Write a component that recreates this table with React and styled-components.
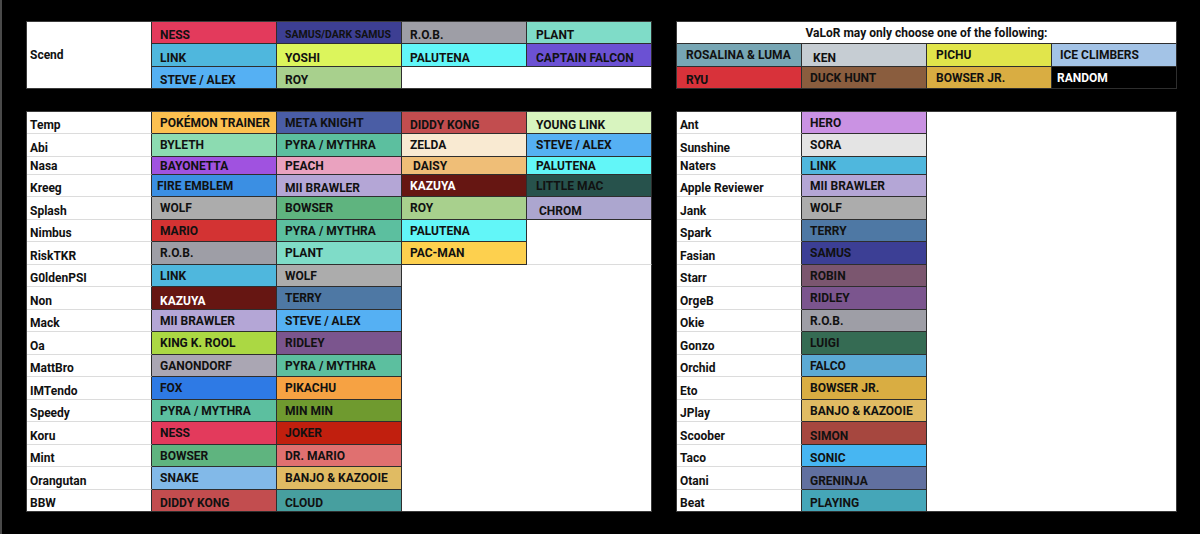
import React from 'react'
import styled, { createGlobalStyle } from 'styled-components'

const Global = createGlobalStyle`
  html, body {
    margin: 0;
    padding: 0;
    background: #000;
  }
`

const Page = styled.div`
  width: 1200px;
  height: 534px;
  box-sizing: border-box;
  background: #000;
  border-left: 2px solid #4a4a4a;
  padding: 21px 0 0 24px;
  display: flex;
  flex-direction: column;
  gap: 22px;
  overflow: hidden;
  font-family: Roboto, "Liberation Sans", Arial, sans-serif;
  font-weight: 700;
  font-size: 12px;
  line-height: 14px;
`

const Section = styled.div`
  display: flex;
  align-items: flex-start;
  gap: 24px;
`

const Sheet = styled.div`
  display: grid;
  grid-template-columns: repeat(${p => p.$cols}, 125px);
  grid-template-rows: ${p => p.$rows};
  background: #fff;
  border-top: 1px solid #3a3a3a;
  border-left: 1px solid #3a3a3a;
`

const NameCell = styled.div`
  display: flex;
  align-items: ${p => (p.$center ? 'center' : 'flex-end')};
  padding: 0 0 1px 3px;
  background: #fff;
  color: #111;
  white-space: nowrap;
  border-right: 1px solid #2e2e2e;
  border-bottom: 1px solid ${p => (p.$last ? '#3a3a3a' : '#dcdcdc')};
  grid-row: ${p => (p.$span ? `span ${p.$span}` : 'auto')};
`

const Pick = styled.div`
  display: flex;
  align-items: ${p => (p.$low ? 'flex-end' : 'center')};
  padding: 0 2px ${p => (p.$low ? '1px' : '0')} ${p => p.$indent}px;
  background: ${p => p.$bg};
  color: ${p => (p.$light ? '#fff' : '#111')};
  font-size: ${p => (p.$small ? '10.5px' : '12px')};
  white-space: nowrap;
  overflow: hidden;
  border-right: 1px solid #2e2e2e;
  border-bottom: 1px solid #2e2e2e;
`

const Header = styled.div`
  grid-column: 1 / span 4;
  display: flex;
  align-items: center;
  justify-content: center;
  background: #fff;
  color: #111;
  border-right: 1px solid #3a3a3a;
  border-bottom: 1px solid #2e2e2e;
`

const Blank = styled.div`
  grid-column: ${p => p.$col} / span ${p => p.$w};
  grid-row: ${p => p.$row} / span ${p => p.$h};
  background: #fff;
  border-right: 1px solid #3a3a3a;
  border-bottom: 1px solid ${p => p.$line || '#3a3a3a'};
`

const MAIN_ROWS = '22px 23px 18px 22px 23px 22px 23px 22px 23px 22px 23px 22px 23px 22px 23px 22px 23px 22px'

// [text, colour, options]
const scendPicks = [
  ['NESS', '#e33a5c'], ['SAMUS/DARK SAMUS', '#3d3f93', { small: true }], ['R.O.B.', '#9e9ea6'], ['PLANT', '#7fdcc8', { indent: 9 }],
  ['LINK', '#4fb7dd'], ['YOSHI', '#dcf55c'], ['PALUTENA', '#62f6f8'], ['CAPTAIN FALCON', '#6b51d3', { indent: 9 }],
  ['STEVE / ALEX', '#55b0f3'], ['ROY', '#a8d08d'],
]

const valorPicks = [
  ['ROSALINA & LUMA', '#77a6b4', { indent: 9 }], ['KEN', '#c6cdd3', { low: true, indent: 11 }], ['PICHU', '#e1e54b', { indent: 9 }], ['ICE CLIMBERS', '#a3c3e6'],
  ['RYU', '#d8323a', { low: true, indent: 9 }], ['DUCK HUNT', '#8a5d3e'], ['BOWSER JR.', '#d9ad42', { indent: 9 }], ['RANDOM', '#000', { light: true, indent: 5 }],
]

const leftRows = [
  ['Temp', [['POKÉMON TRAINER', '#fcc050'], ['META KNIGHT', '#4a5da5'], ['DIDDY KONG', '#c24d4f', { low: true }], ['YOUNG LINK', '#d8f4bf', { low: true, indent: 9 }]]],
  ['Abi', [['BYLETH', '#8cdbb1'], ['PYRA / MYTHRA', '#5cbf9f'], ['ZELDA', '#f9ead2'], ['STEVE / ALEX', '#55b0f3', { indent: 9 }]]],
  ['Nasa', [['BAYONETTA', '#a052e0'], ['PEACH', '#eaa2bf'], ['DAISY', '#efbe77', { indent: 11 }], ['PALUTENA', '#62f6f8', { indent: 9 }]]],
  ['Kreeg', [['FIRE EMBLEM', '#3b8fe3', { indent: 5 }], ['MII BRAWLER', '#b4a6d6', { low: true }], ['KAZUYA', '#661612', { light: true }], ['LITTLE MAC', '#27524c', { indent: 9 }]]],
  ['Splash', [['WOLF', '#acacac'], ['BOWSER', '#5fb47f'], ['ROY', '#a8d08d'], ['CHROM', '#aca6cf', { low: true, indent: 12 }]]],
  ['Nimbus', [['MARIO', '#d33333'], ['PYRA / MYTHRA', '#5cbf9f'], ['PALUTENA', '#62f6f8']]],
  ['RiskTKR', [['R.O.B.', '#9e9ea6'], ['PLANT', '#7fdcc8'], ['PAC-MAN', '#fdd04e']]],
  ['G0ldenPSI', [['LINK', '#4fb7dd'], ['WOLF', '#acacac']]],
  ['Non', [['KAZUYA', '#661612', { light: true, low: true }], ['TERRY', '#4e78a4']]],
  ['Mack', [['MII BRAWLER', '#b4a6d6'], ['STEVE / ALEX', '#55b0f3']]],
  ['Oa', [['KING K. ROOL', '#abd843'], ['RIDLEY', '#7b558e']]],
  ['MattBro', [['GANONDORF', '#aaa6b3'], ['PYRA / MYTHRA', '#5cbf9f']]],
  ['IMTendo', [['FOX', '#2e7ae5'], ['PIKACHU', '#f6a243']]],
  ['Speedy', [['PYRA / MYTHRA', '#5cbf9f'], ['MIN MIN', '#6f9a2f']]],
  ['Koru', [['NESS', '#e33a5c'], ['JOKER', '#c11f0e']]],
  ['Mint', [['BOWSER', '#5fb47f'], ['DR. MARIO', '#e07070']]],
  ['Orangutan', [['SNAKE', '#82b9e8'], ['BANJO & KAZOOIE', '#e0bb63']]],
  ['BBW', [['DIDDY KONG', '#c24d4f', { low: true }], ['CLOUD', '#479f9f', { low: true }]]],
]

const rightRows = [
  ['Ant', ['HERO', '#ca92e3']],
  ['Sunshine', ['SORA', '#e4e4e4']],
  ['Naters', ['LINK', '#4fb7dd']],
  ['Apple Reviewer', ['MII BRAWLER', '#b4a6d6']],
  ['Jank', ['WOLF', '#acacac']],
  ['Spark', ['TERRY', '#4e78a4']],
  ['Fasian', ['SAMUS', '#3c3f95']],
  ['Starr', ['ROBIN', '#7b566f']],
  ['OrgeB', ['RIDLEY', '#7b558e']],
  ['Okie', ['R.O.B.', '#9e9ea6']],
  ['Gonzo', ['LUIGI', '#356b53']],
  ['Orchid', ['FALCO', '#5caad5']],
  ['Eto', ['BOWSER JR.', '#d9ad42']],
  ['JPlay', ['BANJO & KAZOOIE', '#e0bb63']],
  ['Scoober', ['SIMON', '#a6473f', { low: true }]],
  ['Taco', ['SONIC', '#47b6f2', { low: true }]],
  ['Otani', ['GRENINJA', '#61709f', { low: true }]],
  ['Beat', ['PLAYING', '#45a6b8', { low: true }]],
]

const Cell = ({ pick, low }) => {
  const [text, bg, opt = {}] = pick
  return (
    <Pick
      $bg={bg}
      $low={opt.low ?? low}
      $light={opt.light}
      $small={opt.small}
      $indent={opt.indent ?? 8}
    >
      {text}
    </Pick>
  )
}

const App = () => {
  return (
    <>
      <Global />
      <Page>
        <Section>
          <Sheet $cols={5} $rows="22px 23px 22px">
            <NameCell $span={3} $center $last>Scend</NameCell>
            <Blank $col={4} $row={3} $w={2} $h={1} />
            {scendPicks.map((p, i) => <Cell key={i} pick={p} low />)}
          </Sheet>
          <Sheet $cols={4} $rows="22px 23px 22px">
            <Header>VaLoR may only choose one of the following:</Header>
            {valorPicks.map((p, i) => <Cell key={i} pick={p} />)}
          </Sheet>
        </Section>

        <Section>
          <Sheet $cols={5} $rows={MAIN_ROWS}>
            <Blank $col={5} $row={6} $w={1} $h={2} $line="#dcdcdc" />
            <Blank $col={4} $row={8} $w={2} $h={11} />
            {leftRows.map(([name, picks], i) => (
              <React.Fragment key={name}>
                <NameCell $last={i === leftRows.length - 1}>{name}</NameCell>
                {picks.map((p, j) => <Cell key={j} pick={p} />)}
              </React.Fragment>
            ))}
          </Sheet>
          <Sheet $cols={4} $rows={MAIN_ROWS}>
            <Blank $col={3} $row={1} $w={2} $h={18} />
            {rightRows.map(([name, pick], i) => (
              <React.Fragment key={name}>
                <NameCell $last={i === rightRows.length - 1}>{name}</NameCell>
                <Cell pick={pick} />
              </React.Fragment>
            ))}
          </Sheet>
        </Section>
      </Page>
    </>
  )
}

export default App
